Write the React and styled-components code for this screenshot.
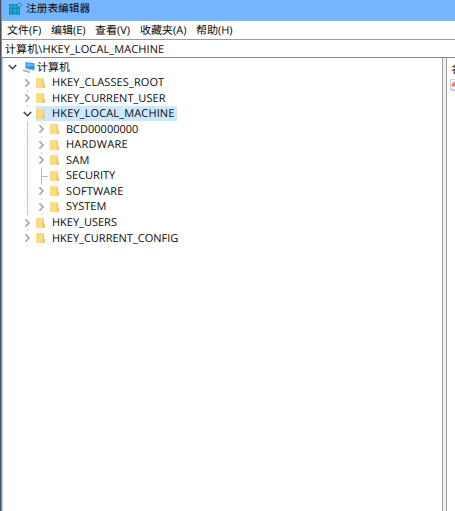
import React from 'react';
import styled, { createGlobalStyle } from 'styled-components';

const GlobalStyle = createGlobalStyle`
  * {
    box-sizing: border-box;
  }
  body {
    margin: 0;
    overflow: hidden;
    font-family: 'Open Sans', 'Noto Sans CJK SC', sans-serif;
    font-size: 11px;
    color: #080808;
    text-rendering: geometricPrecision;
  }
`;

const Desktop = styled.div`
  width: 455px;
  height: 511px;
  padding-left: 1px;
  background: #4c5058;
  overflow: hidden;
`;

const Window = styled.div`
  display: flex;
  flex-direction: column;
  width: 454px;
  height: 511px;
  border-left: 1px solid #7396c8;
  background: #fff;
`;

const TitleBar = styled.div`
  display: flex;
  align-items: center;
  flex: none;
  height: 21px;
  padding: 0 0 3px 6px;
  background: #75b6ff;
`;

const Title = styled.span`
  margin-left: 3px;
  font-size: 10.7px;
  line-height: 16px;
  white-space: nowrap;
`;

const MenuBar = styled.div`
  display: flex;
  flex: none;
  height: 18px;
  padding-left: 5px;
`;

const MenuItem = styled.span`
  width: ${(props) => props.$width}px;
  line-height: 20px;
  white-space: nowrap;
`;

const AddressBar = styled.div`
  flex: none;
  height: 19px;
  padding-left: 3px;
  border-top: 1px solid #9b9b9b;
  border-bottom: 1px solid #858585;
  line-height: 19px;
  letter-spacing: 0.1px;
  white-space: nowrap;
`;

const Body = styled.div`
  display: flex;
  flex: 1;
  min-height: 0;
  border-left: 1px solid #b3cbed;
`;

const TreePane = styled.div`
  width: 440px;
  padding: 1.6px 0 0 4px;
  border-right: 1px solid #9c9fa6;
`;

const Splitter = styled.div`
  width: 3px;
  background: #f0f0f0;
`;

const ListPane = styled.div`
  flex: 1;
  padding: 4px 0 0 3px;
  border-left: 1px solid #9c9fa6;
  overflow: hidden;
`;

const ColumnName = styled.div`
  height: 16px;
  padding-left: 1px;
  line-height: 16px;
  white-space: nowrap;
`;

const Row = styled.div`
  display: flex;
  align-items: center;
  height: 15.53px;
`;

const Indent = styled.span`
  flex: none;
  width: 15px;
`;

const Guide = styled.span`
  align-self: stretch;
  flex: none;
  width: 14px;
  background: repeating-linear-gradient(#b4b4b4 0 1px, #dcdcdc 1px 2px) 5px 0 / 1px 100% no-repeat;
`;

/* short dots above and below the arrow join it to its neighbours */
const Toggle = styled.span`
  display: flex;
  align-items: center;
  align-self: stretch;
  flex: none;
  width: ${(props) => (props.$joined === undefined ? 15 : 14)}px;
  background: ${(props) =>
    props.$joined
      ? 'linear-gradient(#cfcfcf, #cfcfcf) 5px 0 / 1px 1px no-repeat, linear-gradient(#cfcfcf, #cfcfcf) 5px 100% / 1px 1px no-repeat'
      : 'none'};
`;

const Label = styled.span`
  display: flex;
  align-items: center;
  height: 15px;
  padding-right: 2px;
  background: ${(props) => (props.$selected ? '#cce8ff' : 'transparent')};
`;

const Name = styled.span`
  margin-left: ${(props) => (props.$root ? 2 : 6)}px;
  line-height: 15px;
  letter-spacing: ${(props) => props.$spacing || 0}px;
  white-space: nowrap;
`;

const nodes = [
  { name: 'HKEY_CLASSES_ROOT', depth: 1, state: 'closed', spacing: 0.1 },
  { name: 'HKEY_CURRENT_USER', depth: 1, state: 'closed', spacing: 0.05 },
  { name: 'HKEY_LOCAL_MACHINE', depth: 1, state: 'open', spacing: 0.14, selected: true },
  { name: 'BCD00000000', depth: 2, state: 'closed' },
  { name: 'HARDWARE', depth: 2, state: 'closed', spacing: 0.25 },
  { name: 'SAM', depth: 2, state: 'closed', spacing: 0.2 },
  { name: 'SECURITY', depth: 2, state: 'leaf' },
  { name: 'SOFTWARE', depth: 2, state: 'closed', spacing: 0.15 },
  { name: 'SYSTEM', depth: 2, state: 'closed' },
  { name: 'HKEY_USERS', depth: 1, state: 'closed' },
  { name: 'HKEY_CURRENT_CONFIG', depth: 1, state: 'closed' },
];

function RegistryIcon() {
  return (
    <svg width="15" height="15" viewBox="0 0 15 15">
      <path d="M1 2h8v3h3v8H1z" fill="#168db8" />
      <path d="M2 3h2v3H2zM5 3h3v3H5zM2 7h2v3H2zM5 7h3v3H5zM9 7h2v3H9zM2 11h2v2H2zM5 11h3v2H5zM9 11h2v2H9z" fill="#1ea5d0" />
      <path d="M11.5 1l2 1v2l-2 1-2-1V2z" fill="#68c5ed" stroke="#278fc5" />
    </svg>
  );
}

function ComputerIcon() {
  return (
    <svg width="13" height="13" viewBox="0 0 13 13">
      <path d="M3.5 1l9 1.5v6.5l-9-2z" fill="#1e91dc" />
      <path d="M4.5 2l7 1.3v2l-7 .7z" fill="#54bdf5" />
      <path d="M3.5 7l9 2v1l-9-2z" fill="#a7b9c6" />
      <path d="M1.5 8L9 10.2 7.5 12 .5 10z" fill="#cbd1d5" />
      <path d="M1 9.5l6.5 2" stroke="#8b969e" strokeWidth=".7" />
    </svg>
  );
}

function FolderIcon() {
  return (
    <svg width="10" height="12" viewBox="0 0 10 12">
      <path d="M.5 1H7.5v7H9v3H.5z" fill="#ffdc80" />
      <path d="M.5 1h1v10h-1z" fill="#f7d06e" />
      <path d="M7 1.5h1V7h1v4H6.5V8z" fill="#f0c869" />
    </svg>
  );
}

function Chevron({ state }) {
  if (state === 'leaf') {
    return (
      <svg width="14" height="16" viewBox="0 0 14 16">
        <path d="M5.5 0v16M6 8.5h6" fill="none" stroke="#bababa" />
      </svg>
    );
  }
  return (
    <svg width="12" height="12" viewBox="0 0 12 12">
      {state === 'open' ? (
        <path d="M1.8 4l3.7 3.7L9.2 4" fill="none" stroke="#3f3f3f" strokeWidth="1.5" />
      ) : (
        <path d="M3.4 2.3L7.1 6 3.4 9.7" fill="none" stroke="#9b9b9b" strokeWidth="1.4" />
      )}
    </svg>
  );
}

function ValueIcon() {
  return (
    <svg width="12" height="15" viewBox="0 0 12 15">
      <path d="M.5 1.5h11v10l-2 2-9-2z" fill="#f5f5f5" stroke="#d2d2d2" />
      <path d="M5 4L2.3 6v2.2L5 7.5" fill="#f08a74" stroke="#e8705b" />
      <path d="M1 11l4 2" stroke="#aaa" />
    </svg>
  );
}

function TreeNode({ node }) {
  return (
    <Row>
      <Indent />
      {node.depth === 2 && <Guide />}
      <Toggle $joined={node.state !== 'leaf'}>
        <Chevron state={node.state} />
      </Toggle>
      <Label $selected={node.selected}>
        <FolderIcon />
        <Name $spacing={node.spacing}>{node.name}</Name>
      </Label>
    </Row>
  );
}

function App() {
  return (
    <>
      <GlobalStyle />
      <Desktop>
        <Window>
          <TitleBar>
            <RegistryIcon />
            <Title>注册表编辑器</Title>
          </TitleBar>
          <MenuBar>
            <MenuItem $width={44}>文件(F)</MenuItem>
            <MenuItem $width={44}>编辑(E)</MenuItem>
            <MenuItem $width={45}>查看(V)</MenuItem>
            <MenuItem $width={56}>收藏夹(A)</MenuItem>
            <MenuItem $width={50}>帮助(H)</MenuItem>
          </MenuBar>
          <AddressBar>计算机\HKEY_LOCAL_MACHINE</AddressBar>
          <Body>
            <TreePane>
              <Row>
                <Toggle>
                  <Chevron state="open" />
                </Toggle>
                <ComputerIcon />
                <Name $root>计算机</Name>
              </Row>
              {nodes.map((node) => (
                <TreeNode key={node.name} node={node} />
              ))}
            </TreePane>
            <Splitter />
            <ListPane>
              <ColumnName>名称</ColumnName>
              <ValueIcon />
            </ListPane>
          </Body>
        </Window>
      </Desktop>
    </>
  );
}

export default App;
